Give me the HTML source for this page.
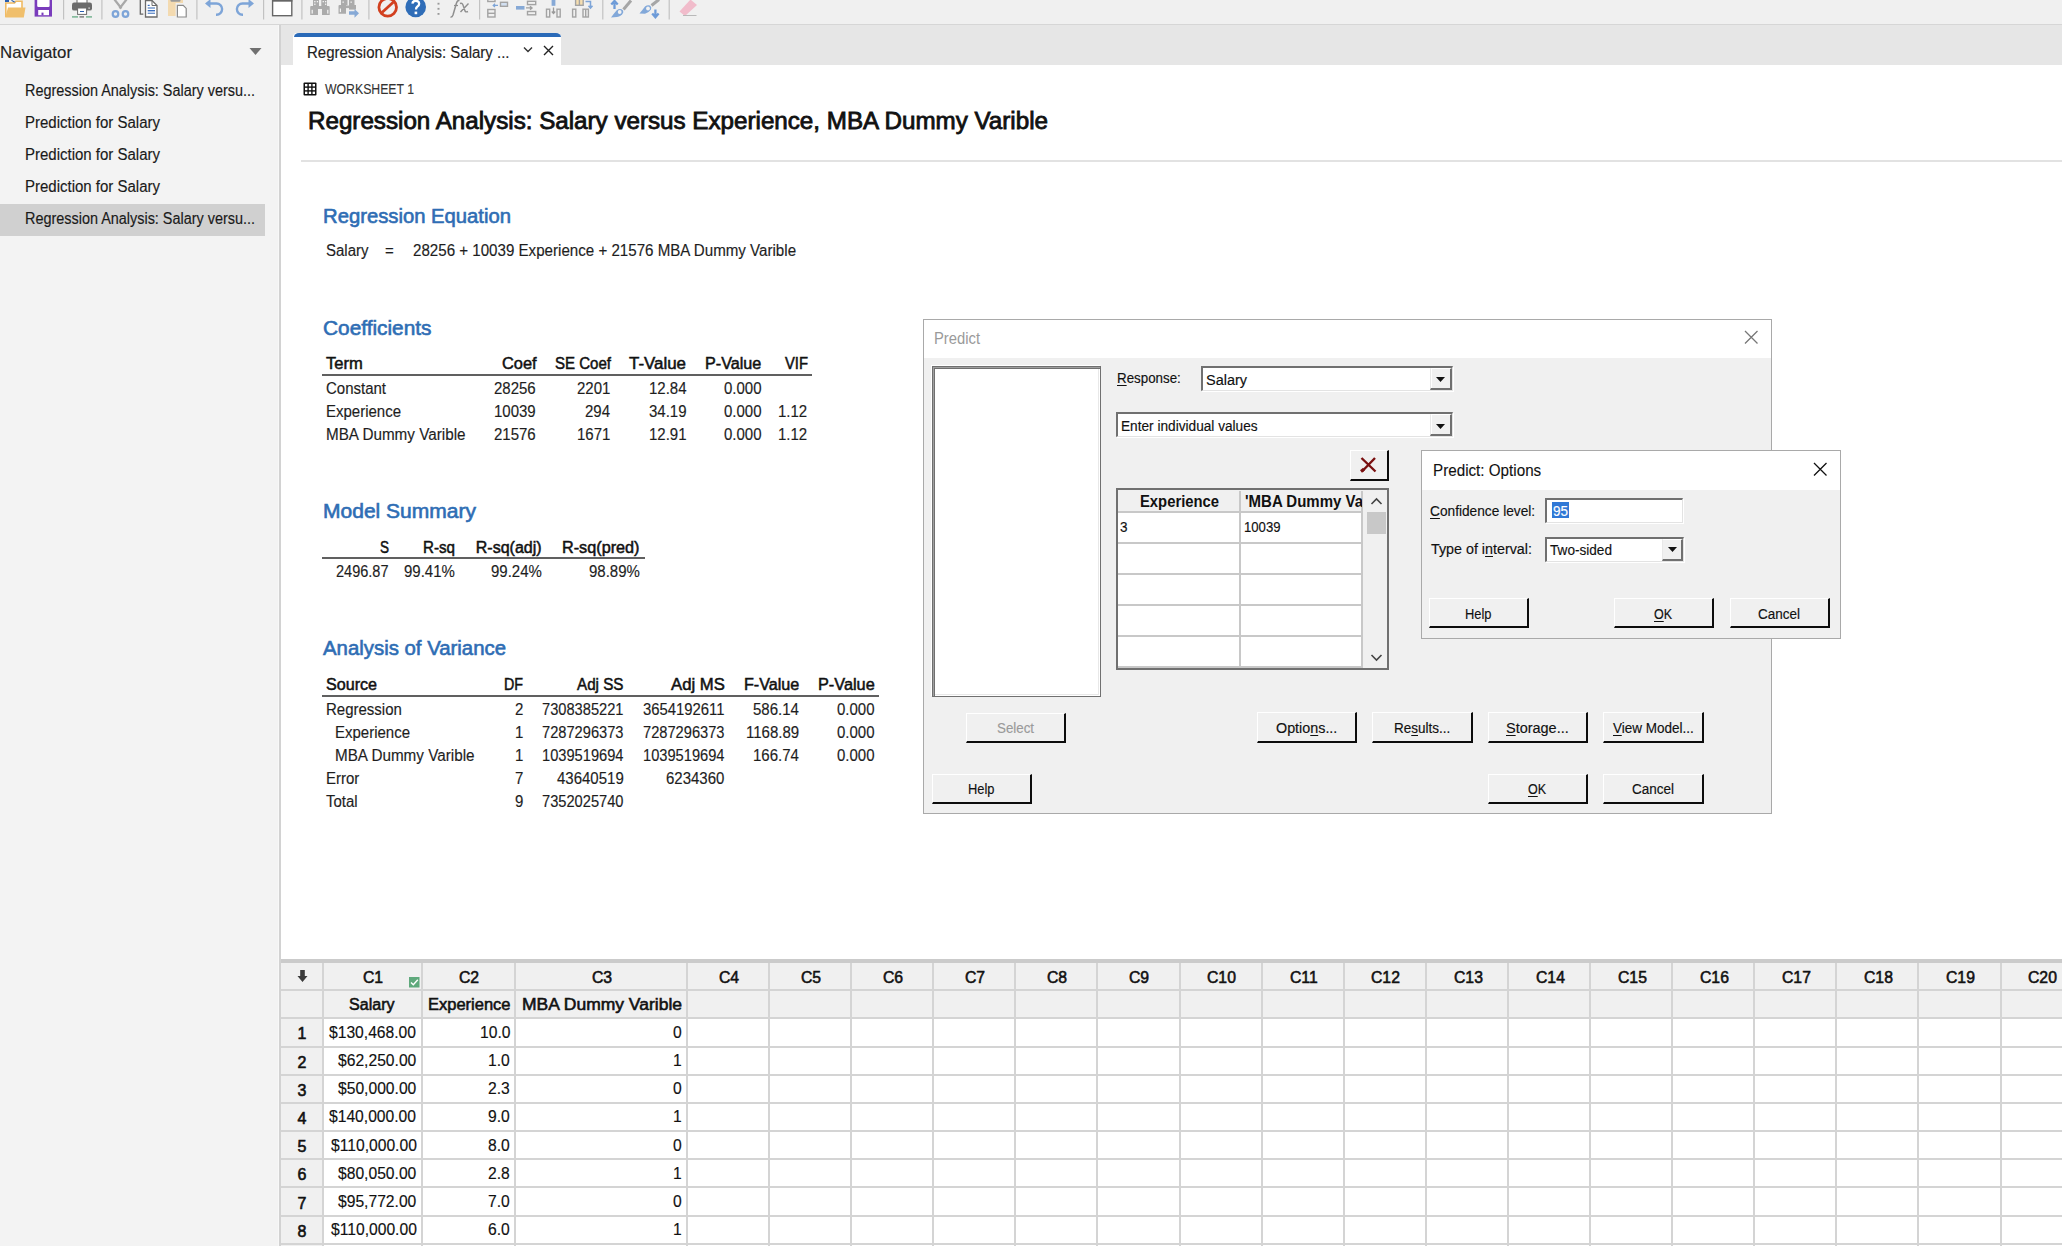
<!DOCTYPE html>
<html><head><meta charset="utf-8"><title>Minitab</title>
<style>
html,body{margin:0;padding:0;}
body{width:2062px;height:1246px;overflow:hidden;position:relative;background:#fff;font-family:"Liberation Sans",sans-serif;}
body>div{position:absolute;}
.t{white-space:nowrap;}
u{text-decoration:underline;text-underline-offset:1.5px;text-decoration-thickness:1px;}
</style></head><body>
<div style="left:0px;top:0px;width:2062px;height:24px;background:#f0f0f0;"></div>
<div style="left:0px;top:24px;width:2062px;height:1px;background:#d6d6d6;"></div>
<div style="left:0px;top:25px;width:279px;height:1221px;background:#f3f3f3;"></div>
<div style="left:278px;top:25px;width:1px;height:1221px;background:#f8f8f8;"></div>
<div style="left:279px;top:25px;width:2px;height:1221px;background:#d2d2d2;"></div>
<div style="left:281px;top:25px;width:1781px;height:40px;background:#e6e6e6;"></div>
<div style="left:281px;top:65px;width:1781px;height:894px;background:#ffffff;"></div>
<svg style="position:absolute;left:0;top:0" width="710" height="24" viewBox="0 0 710 24">
<!-- folder -->
<path d="M5.8 17 L5.8 3 L14.5 3 L16 1.3 L22 1.3 L22 8" fill="#fff" stroke="#f0bb63" stroke-width="1.6"/>
<path d="M8 7.6 L25.5 7.6 L23.8 17.6 L5.2 17.6 Z" fill="#f0bf6c"/>
<path d="M5 0 L9 0 L9 2 L5 2 Z M12 0 L15.5 2 L14 2.5 L11 0.5 Z" fill="#2a5fb0"/>
<!-- save -->
<rect x="34.6" y="0" width="17.4" height="16.6" fill="#7a3cbc"/>
<path d="M37.2 0 L49.6 0 L49.6 5.8 Q49.6 7 48.4 7 L38.4 7 Q37.2 7 37.2 5.8 Z" fill="#fff"/>
<rect x="38.2" y="10" width="10.8" height="5.2" fill="#fff"/>
<rect x="41.5" y="12.6" width="2" height="2.6" fill="#7a3cbc"/>
<rect x="63" y="0" width="1.2" height="19.5" fill="#c2c2c2"/>
<!-- printer -->
<rect x="77" y="-1" width="10" height="5.2" fill="#fff" stroke="#666" stroke-width="1"/>
<rect x="77" y="3" width="10" height="1.6" fill="#2a5fb0"/>
<rect x="72" y="2.6" width="20" height="8" rx="2.2" fill="#6b6b6b"/>
<rect x="77.6" y="8" width="9" height="6.4" fill="#fff" stroke="#6b6b6b" stroke-width="1"/>
<rect x="80" y="11" width="4" height="1" fill="#2a5fb0"/>
<rect x="88.5" y="7.5" width="1.2" height="1.2" fill="#fff"/>
<rect x="72" y="16.2" width="6" height="1.4" fill="#6fb08c"/>
<rect x="79.5" y="16.2" width="4.5" height="1.4" fill="#777"/>
<rect x="86" y="16.2" width="6" height="1.4" fill="#6fb08c"/>
<rect x="101.3" y="0" width="1.2" height="19.5" fill="#c2c2c2"/>
<!-- scissors -->
<path d="M114.5 -0.5 L121.5 8.5 M126.5 -0.5 L119.5 8.5" stroke="#a8a8a8" stroke-width="2.2" fill="none"/>
<circle cx="115.5" cy="14" r="2.8" fill="none" stroke="#7ea5d8" stroke-width="2.2"/>
<circle cx="125.5" cy="14" r="2.8" fill="none" stroke="#7ea5d8" stroke-width="2.2"/>
<!-- copy -->
<path d="M140.3 0 L140.3 14.2 L143.3 14.2" stroke="#666" stroke-width="1.3" fill="none"/>
<path d="M145.5 0.5 L152 0.5 L157 5.5 L157 17 L145.5 17 Z" fill="#fff" stroke="#6b6b6b" stroke-width="1.3"/>
<path d="M152 0.5 L152 5.5 L157 5.5" fill="none" stroke="#6b6b6b" stroke-width="1"/>
<rect x="147.7" y="4.8" width="2" height="1.2" fill="#3a6fc0"/>
<rect x="147.7" y="7.3" width="7.3" height="1.4" fill="#6d93cc"/>
<rect x="147.7" y="10" width="7.3" height="1.4" fill="#3a6fc0"/>
<rect x="147.7" y="12.6" width="7.3" height="1.4" fill="#6d93cc"/>
<!-- paste -->
<rect x="168" y="0" width="7.6" height="16" fill="#f3dab0"/>
<rect x="175" y="0" width="8" height="3" fill="#f3dab0"/>
<rect x="170.5" y="-1" width="10" height="2.8" rx="1.2" fill="#9a9a9a"/>
<path d="M177.4 5.4 L183.2 5.4 L186.2 8.4 L186.2 17 L177.4 17 Z" fill="#fff" stroke="#8a8a8a" stroke-width="1.2"/>
<rect x="196.3" y="0" width="1.2" height="19.5" fill="#c2c2c2"/>
<!-- undo / redo -->
<path d="M208 3.5 L216.5 3.5 A5.6 5.6 0 0 1 216.5 14.7 L216 14.7" stroke="#7ea5d8" stroke-width="2.4" fill="none"/>
<path d="M205 3.5 L210.5 -1 L210.5 8 Z" fill="#7ea5d8"/>
<path d="M251 3.5 L242.5 3.5 A5.6 5.6 0 0 0 242.5 14.7 L243 14.7" stroke="#7ea5d8" stroke-width="2.4" fill="none"/>
<path d="M254 3.5 L248.5 -1 L248.5 8 Z" fill="#7ea5d8"/>
<rect x="263" y="0" width="1.2" height="19.5" fill="#c2c2c2"/>
<!-- window -->
<rect x="272.6" y="0.5" width="19.2" height="15.2" fill="#fff" stroke="#666" stroke-width="1.4"/>
<rect x="272" y="-1" width="20.4" height="2.6" fill="#666"/>
<rect x="301.3" y="0" width="1.2" height="19.5" fill="#c2c2c2"/>
<!-- binoculars -->
<g fill="#ababab">
<path d="M310.2 7 Q310.2 6 311.2 6 L318 6 L318 15 L310.2 15 Z"/>
<rect x="313" y="-1" width="6" height="7.2"/>
<rect x="318" y="6" width="4" height="3"/>
<path d="M322 6 L328.7 6 Q329.7 6 329.7 7 L329.7 15 L322 15 Z"/>
<rect x="321.3" y="-1" width="5.7" height="7.2"/>
<path d="M338.5 6 Q338.5 5 339.5 5 L346 5 L346 13.7 L338.5 13.7 Z"/>
<rect x="341" y="-1" width="6.5" height="6.2"/>
<rect x="346" y="5.5" width="3.5" height="2.6"/>
<rect x="349" y="-1" width="5.5" height="6.2"/>
<rect x="349" y="5" width="7" height="4.6"/>
</g>
<g fill="#f4f4f4">
<rect x="311.6" y="9.8" width="1.2" height="3.8"/><rect x="327.2" y="9.8" width="1.2" height="3.8"/>
<rect x="314.2" y="1" width="1.3" height="1.3"/><rect x="316.8" y="1" width="1.3" height="1.3"/><rect x="314.2" y="3.6" width="1.3" height="1.3"/>
<rect x="322.6" y="1" width="1.3" height="1.3"/><rect x="325" y="1" width="1.3" height="1.3"/><rect x="325" y="3.6" width="1.3" height="1.3"/>
<rect x="339.8" y="8.5" width="1.2" height="3.6"/>
<rect x="342.5" y="1.5" width="1.3" height="1.3"/><rect x="350.5" y="1.5" width="1.3" height="1.3"/>
</g>
<path d="M349 11.3 L354.5 11.3 L354.5 9 L359 13.3 L354.5 17.7 L354.5 14.8 L349 14.8 Z" fill="#86a9d6"/>
<rect x="368.3" y="0" width="1.2" height="19.5" fill="#c2c2c2"/>
<!-- stop -->
<circle cx="387.7" cy="7.3" r="8.8" fill="none" stroke="#d2401f" stroke-width="2.8"/>
<path d="M382 12.5 L393.5 2" stroke="#d2401f" stroke-width="2.8"/>
<!-- help -->
<circle cx="415.7" cy="7" r="10.3" fill="#2f6db8"/>
<path d="M412.4 3.6 Q412.6 0.8 415.8 0.8 Q419.2 0.8 419.2 3.8 Q419.2 5.6 417.2 6.8 Q416 7.6 416 9.6" stroke="#fff" stroke-width="2.3" fill="none"/>
<rect x="414.6" y="11.6" width="2.6" height="2.6" fill="#fff"/>
<rect x="437.5" y="2.8" width="2" height="1.8" fill="#999"/><rect x="437.5" y="7.9" width="2" height="1.8" fill="#999"/><rect x="437.5" y="13" width="2" height="1.8" fill="#999"/>
<!-- fx -->
<path d="M450.5 17 Q452 17.5 453 15 L456.5 3 Q457.5 0 459.5 0.5" stroke="#8f8f8f" stroke-width="1.5" fill="none"/>
<path d="M454 5.5 L458 5.5" stroke="#8f8f8f" stroke-width="1.2"/>
<path d="M460 3.5 Q462 2.5 463 5 L465 11 Q466 12.5 468 11.5 M468.5 3.5 L460.5 12" stroke="#8f8f8f" stroke-width="1.4" fill="none"/>
<rect x="479" y="0" width="1.2" height="19.5" fill="#c2c2c2"/>
<!-- layout icons -->
<g fill="none" stroke="#a3a3a3" stroke-width="1.4">
<rect x="487.8" y="-1" width="7.2" height="2.5"/>
<rect x="487.8" y="9.5" width="7.2" height="7.5"/><path d="M488 13.3 L495 13.3"/>
<rect x="500.5" y="2.3" width="7" height="4" fill="#d2e0f2"/>
<rect x="527.5" y="1.3" width="8.2" height="3.3"/><rect x="527.5" y="11.5" width="8.2" height="3.3"/>
<rect x="546.5" y="9.2" width="3.2" height="7.8"/><rect x="557" y="9.2" width="3.2" height="7.8"/>
<rect x="572.6" y="9.2" width="3.2" height="7.8"/><rect x="583" y="9.2" width="5.4" height="7.8"/><path d="M585.7 9.2 L585.7 17"/>
<rect x="575.6" y="-1" width="7.6" height="6.3" fill="#f6deb0"/><path d="M579.4 -1 L579.4 5"/>
</g>
<path d="M498 5.4 L493.5 5.4 M495 3.8 L493.2 5.4 L495 7" stroke="#7ea5d8" stroke-width="1.2" fill="none"/>
<rect x="516" y="6" width="8.5" height="3.6" fill="#86a9d6"/>
<path d="M526 7.9 L531.5 7.9 M530 6.2 L532 7.9 L530 9.6" stroke="#a0a0a0" stroke-width="1.4" fill="none"/>
<rect x="551.6" y="-1" width="3.8" height="6.8" fill="#86a9d6"/>
<path d="M553.5 7.5 L553.5 13.5 M551.8 11.5 L553.5 13.5 L555.2 11.5" stroke="#9a9a9a" stroke-width="1.3" fill="none"/>
<path d="M585.5 1.5 L590.5 1.5 L590.5 7.5 M588.5 5.8 L590.5 8.2 L592.5 5.8" stroke="#7ea5d8" stroke-width="1.5" fill="none"/>
<rect x="602.2" y="0" width="1.2" height="19.5" fill="#c2c2c2"/>
<!-- brush icons -->
<path d="M614.5 9 L614.5 3 M611.3 4.6 L614.5 1 L617.7 4.6" stroke="#6d9bd8" stroke-width="2.3" fill="none"/>
<path d="M611 17.6 Q613 14.5 616.5 10.5 Q619 8.5 621.5 9.2 Q624 10.5 623 13 Q621.5 16 617 17 Z" fill="#82a8d9"/>
<circle cx="619.7" cy="12" r="1.9" fill="#f2f2f2"/>
<path d="M623.5 9.5 L631 0.5" stroke="#a6a6a6" stroke-width="3"/>
<path d="M639.5 13.5 Q642 10.5 645 6.5 Q647.5 4.5 650 5.5 Q652 7 651 9.5 Q649 12.5 645 13.8 Z" fill="#82a8d9"/>
<circle cx="648" cy="8.5" r="1.9" fill="#f2f2f2"/>
<path d="M651.5 5.5 L659 -0.5" stroke="#a6a6a6" stroke-width="3"/>
<path d="M655.4 9.5 L655.4 16 M652.2 13.5 L655.4 17.3 L658.6 13.5" stroke="#6d9bd8" stroke-width="2.3" fill="none"/>
<rect x="668.6" y="0" width="1.2" height="19.5" fill="#c2c2c2"/>
<!-- eraser -->
<path d="M679.5 11.5 L690.5 -0.5 L697 5 L685 16 Z" fill="#f1bccb"/>
<path d="M683 15.5 L696.5 15.5" stroke="#b9b9b9" stroke-width="1"/>
</svg>
<div class="t" style="left:0.00px;top:43.37px;font-size:16.5px;line-height:18.430px;color:#222;-webkit-text-stroke:0.15px #222;transform:scaleX(1.0197);transform-origin:0 0;">Navigator</div>
<svg style="position:absolute;left:249px;top:47px" width="14" height="9"><path d="M0.5 1 L12.5 1 L6.5 8 Z" fill="#707070"/></svg>
<div style="left:0px;top:204px;width:265px;height:32px;background:#d0d0d0;"></div>
<div class="t" style="left:24.50px;top:81.82px;font-size:16px;line-height:17.872px;color:#1a1a1a;-webkit-text-stroke:0.15px #1a1a1a;transform:scaleX(0.9012);transform-origin:0 0;">Regression Analysis: Salary versu...</div>
<div class="t" style="left:24.50px;top:113.82px;font-size:16px;line-height:17.872px;color:#1a1a1a;-webkit-text-stroke:0.15px #1a1a1a;transform:scaleX(0.9371);transform-origin:0 0;">Prediction for Salary</div>
<div class="t" style="left:24.50px;top:145.82px;font-size:16px;line-height:17.872px;color:#1a1a1a;-webkit-text-stroke:0.15px #1a1a1a;transform:scaleX(0.9371);transform-origin:0 0;">Prediction for Salary</div>
<div class="t" style="left:24.50px;top:177.82px;font-size:16px;line-height:17.872px;color:#1a1a1a;-webkit-text-stroke:0.15px #1a1a1a;transform:scaleX(0.9371);transform-origin:0 0;">Prediction for Salary</div>
<div class="t" style="left:24.50px;top:209.82px;font-size:16px;line-height:17.872px;color:#1a1a1a;-webkit-text-stroke:0.15px #1a1a1a;transform:scaleX(0.9012);transform-origin:0 0;">Regression Analysis: Salary versu...</div>
<div style="left:293px;top:33px;width:268px;height:32px;background:#fff;border-top-left-radius:4px;border-top-right-radius:4px;"></div>
<div style="left:293.5px;top:33px;width:267.5px;height:4px;background:#2a6ab8;border-top-left-radius:5px 4px;border-top-right-radius:5px 4px;"></div>
<div class="t" style="left:307.30px;top:43.82px;font-size:16px;line-height:17.872px;color:#222;-webkit-text-stroke:0.15px #222;transform:scaleX(0.9371);transform-origin:0 0;">Regression Analysis: Salary ...</div>
<svg style="position:absolute;left:523px;top:46px" width="10" height="8"><path d="M1 1.5 L5 5.5 L9 1.5" stroke="#333" stroke-width="1.4" fill="none"/></svg>
<svg style="position:absolute;left:543px;top:45px" width="11" height="11"><path d="M1 1 L10 10 M10 1 L1 10" stroke="#222" stroke-width="1.4" fill="none"/></svg>
<svg style="position:absolute;left:302.5px;top:81.5px" width="14" height="14" viewBox="0 0 14 14"><rect x="0.5" y="0.5" width="13" height="13" rx="1" fill="#111"/><rect x="2.0" y="2.0" width="2.4" height="2.4" fill="#fff"/><rect x="2.0" y="5.8" width="2.4" height="2.4" fill="#fff"/><rect x="2.0" y="9.6" width="2.4" height="2.4" fill="#fff"/><rect x="5.8" y="2.0" width="2.4" height="2.4" fill="#fff"/><rect x="5.8" y="5.8" width="2.4" height="2.4" fill="#fff"/><rect x="5.8" y="9.6" width="2.4" height="2.4" fill="#fff"/><rect x="9.6" y="2.0" width="2.4" height="2.4" fill="#fff"/><rect x="9.6" y="5.8" width="2.4" height="2.4" fill="#fff"/><rect x="9.6" y="9.6" width="2.4" height="2.4" fill="#fff"/></svg>
<div class="t" style="left:324.70px;top:81.63px;font-size:14px;line-height:15.638px;color:#333;-webkit-text-stroke:0.1px #333;transform:scaleX(0.8755);transform-origin:0 0;">WORKSHEET 1</div>
<div class="t" style="left:307.50px;top:108.78px;font-size:23px;line-height:25.691px;color:#111;-webkit-text-stroke:0.8px #111;transform:scaleX(1.0513);transform-origin:0 0;">Regression Analysis: Salary versus Experience, MBA Dummy Varible</div>
<div style="left:301px;top:160px;width:1761px;height:2px;background:#e2e2e2;"></div>
<div class="t" style="left:323.00px;top:205.20px;font-size:20px;line-height:22.340px;color:#2e6db4;-webkit-text-stroke:0.6px #2e6db4;transform:scaleX(1.0126);transform-origin:0 0;">Regression Equation</div>
<div class="t" style="left:326.20px;top:241.82px;font-size:16px;line-height:17.872px;color:#1e1e1e;-webkit-text-stroke:0.15px #1e1e1e;transform:scaleX(0.9375);transform-origin:0 0;">Salary</div>
<div class="t" style="left:385.40px;top:241.82px;font-size:16px;line-height:17.872px;color:#1e1e1e;-webkit-text-stroke:0.15px #1e1e1e;transform:scaleX(0.9375);transform-origin:0 0;">=</div>
<div class="t" style="left:413.20px;top:241.82px;font-size:16px;line-height:17.872px;color:#1e1e1e;-webkit-text-stroke:0.15px #1e1e1e;transform:scaleX(0.9451);transform-origin:0 0;">28256 + 10039 Experience + 21576 MBA Dummy Varible</div>
<div class="t" style="left:323.00px;top:316.80px;font-size:20px;line-height:22.340px;color:#2e6db4;-webkit-text-stroke:0.6px #2e6db4;transform:scaleX(1.0420);transform-origin:0 0;">Coefficients</div>
<div class="t" style="left:326.20px;top:354.82px;font-size:16px;line-height:17.872px;color:#111;-webkit-text-stroke:0.5px #111;transform:scaleX(1.0323);transform-origin:0 0;">Term</div>
<div class="t" style="left:501.70px;top:354.82px;font-size:16px;line-height:17.872px;color:#111;-webkit-text-stroke:0.5px #111;transform:scaleX(1.0238);transform-origin:0 0;">Coef</div>
<div class="t" style="left:554.60px;top:354.82px;font-size:16px;line-height:17.872px;color:#111;-webkit-text-stroke:0.5px #111;transform:scaleX(0.9398);transform-origin:0 0;">SE Coef</div>
<div class="t" style="left:629.40px;top:354.82px;font-size:16px;line-height:17.872px;color:#111;-webkit-text-stroke:0.5px #111;transform:scaleX(1.0565);transform-origin:0 0;">T-Value</div>
<div class="t" style="left:705.00px;top:354.82px;font-size:16px;line-height:17.872px;color:#111;-webkit-text-stroke:0.5px #111;transform:scaleX(1.0102);transform-origin:0 0;">P-Value</div>
<div class="t" style="left:784.50px;top:354.82px;font-size:16px;line-height:17.872px;color:#111;-webkit-text-stroke:0.5px #111;transform:scaleX(0.9241);transform-origin:0 0;">VIF</div>
<div style="left:322px;top:374px;width:490px;height:2px;background:#606060;"></div>
<div class="t" style="left:326.00px;top:379.82px;font-size:16px;line-height:17.872px;color:#1e1e1e;-webkit-text-stroke:0.15px #1e1e1e;transform:scaleX(0.9375);transform-origin:0 0;">Constant</div>
<div class="t" style="left:494.09px;top:379.82px;font-size:16px;line-height:17.872px;color:#1e1e1e;-webkit-text-stroke:0.15px #1e1e1e;transform:scaleX(0.9375);transform-origin:0 0;">28256</div>
<div class="t" style="left:577.03px;top:379.82px;font-size:16px;line-height:17.872px;color:#1e1e1e;-webkit-text-stroke:0.15px #1e1e1e;transform:scaleX(0.9375);transform-origin:0 0;">2201</div>
<div class="t" style="left:648.67px;top:379.82px;font-size:16px;line-height:17.872px;color:#1e1e1e;-webkit-text-stroke:0.15px #1e1e1e;transform:scaleX(0.9375);transform-origin:0 0;">12.84</div>
<div class="t" style="left:723.77px;top:379.82px;font-size:16px;line-height:17.872px;color:#1e1e1e;-webkit-text-stroke:0.15px #1e1e1e;transform:scaleX(0.9375);transform-origin:0 0;">0.000</div>
<div class="t" style="left:326.00px;top:402.82px;font-size:16px;line-height:17.872px;color:#1e1e1e;-webkit-text-stroke:0.15px #1e1e1e;transform:scaleX(0.9375);transform-origin:0 0;">Experience</div>
<div class="t" style="left:494.09px;top:402.82px;font-size:16px;line-height:17.872px;color:#1e1e1e;-webkit-text-stroke:0.15px #1e1e1e;transform:scaleX(0.9375);transform-origin:0 0;">10039</div>
<div class="t" style="left:585.38px;top:402.82px;font-size:16px;line-height:17.872px;color:#1e1e1e;-webkit-text-stroke:0.15px #1e1e1e;transform:scaleX(0.9375);transform-origin:0 0;">294</div>
<div class="t" style="left:648.67px;top:402.82px;font-size:16px;line-height:17.872px;color:#1e1e1e;-webkit-text-stroke:0.15px #1e1e1e;transform:scaleX(0.9375);transform-origin:0 0;">34.19</div>
<div class="t" style="left:723.77px;top:402.82px;font-size:16px;line-height:17.872px;color:#1e1e1e;-webkit-text-stroke:0.15px #1e1e1e;transform:scaleX(0.9375);transform-origin:0 0;">0.000</div>
<div class="t" style="left:778.31px;top:402.82px;font-size:16px;line-height:17.872px;color:#1e1e1e;-webkit-text-stroke:0.15px #1e1e1e;transform:scaleX(0.9375);transform-origin:0 0;">1.12</div>
<div class="t" style="left:326.00px;top:425.82px;font-size:16px;line-height:17.872px;color:#1e1e1e;-webkit-text-stroke:0.15px #1e1e1e;transform:scaleX(0.9529);transform-origin:0 0;">MBA Dummy Varible</div>
<div class="t" style="left:494.09px;top:425.82px;font-size:16px;line-height:17.872px;color:#1e1e1e;-webkit-text-stroke:0.15px #1e1e1e;transform:scaleX(0.9375);transform-origin:0 0;">21576</div>
<div class="t" style="left:577.03px;top:425.82px;font-size:16px;line-height:17.872px;color:#1e1e1e;-webkit-text-stroke:0.15px #1e1e1e;transform:scaleX(0.9375);transform-origin:0 0;">1671</div>
<div class="t" style="left:648.67px;top:425.82px;font-size:16px;line-height:17.872px;color:#1e1e1e;-webkit-text-stroke:0.15px #1e1e1e;transform:scaleX(0.9375);transform-origin:0 0;">12.91</div>
<div class="t" style="left:723.77px;top:425.82px;font-size:16px;line-height:17.872px;color:#1e1e1e;-webkit-text-stroke:0.15px #1e1e1e;transform:scaleX(0.9375);transform-origin:0 0;">0.000</div>
<div class="t" style="left:778.31px;top:425.82px;font-size:16px;line-height:17.872px;color:#1e1e1e;-webkit-text-stroke:0.15px #1e1e1e;transform:scaleX(0.9375);transform-origin:0 0;">1.12</div>
<div class="t" style="left:323.00px;top:500.00px;font-size:20px;line-height:22.340px;color:#2e6db4;-webkit-text-stroke:0.6px #2e6db4;transform:scaleX(1.0509);transform-origin:0 0;">Model Summary</div>
<div class="t" style="left:379.60px;top:538.82px;font-size:16px;line-height:17.872px;color:#111;-webkit-text-stroke:0.5px #111;transform:scaleX(0.8433);transform-origin:0 0;">S</div>
<div class="t" style="left:423.10px;top:538.82px;font-size:16px;line-height:17.872px;color:#111;-webkit-text-stroke:0.5px #111;transform:scaleX(0.9473);transform-origin:0 0;">R-sq</div>
<div class="t" style="left:475.80px;top:538.82px;font-size:16px;line-height:17.872px;color:#111;-webkit-text-stroke:0.5px #111;">R-sq(adj)</div>
<div class="t" style="left:562.30px;top:538.82px;font-size:16px;line-height:17.872px;color:#111;-webkit-text-stroke:0.5px #111;transform:scaleX(1.0137);transform-origin:0 0;">R-sq(pred)</div>
<div style="left:322px;top:557px;width:323px;height:2px;background:#606060;"></div>
<div class="t" style="left:336.40px;top:562.82px;font-size:16px;line-height:17.872px;color:#1e1e1e;-webkit-text-stroke:0.15px #1e1e1e;transform:scaleX(0.9078);transform-origin:0 0;">2496.87</div>
<div class="t" style="left:404.23px;top:562.82px;font-size:16px;line-height:17.872px;color:#1e1e1e;-webkit-text-stroke:0.15px #1e1e1e;transform:scaleX(0.9375);transform-origin:0 0;">99.41%</div>
<div class="t" style="left:491.33px;top:562.82px;font-size:16px;line-height:17.872px;color:#1e1e1e;-webkit-text-stroke:0.15px #1e1e1e;transform:scaleX(0.9375);transform-origin:0 0;">99.24%</div>
<div class="t" style="left:588.93px;top:562.82px;font-size:16px;line-height:17.872px;color:#1e1e1e;-webkit-text-stroke:0.15px #1e1e1e;transform:scaleX(0.9375);transform-origin:0 0;">98.89%</div>
<div class="t" style="left:323.00px;top:636.70px;font-size:20px;line-height:22.340px;color:#2e6db4;-webkit-text-stroke:0.6px #2e6db4;transform:scaleX(1.0183);transform-origin:0 0;">Analysis of Variance</div>
<div class="t" style="left:326.20px;top:675.82px;font-size:16px;line-height:17.872px;color:#111;-webkit-text-stroke:0.5px #111;transform:scaleX(1.0061);transform-origin:0 0;">Source</div>
<div class="t" style="left:504.00px;top:675.82px;font-size:16px;line-height:17.872px;color:#111;-webkit-text-stroke:0.5px #111;transform:scaleX(0.8909);transform-origin:0 0;">DF</div>
<div class="t" style="left:577.30px;top:675.82px;font-size:16px;line-height:17.872px;color:#111;-webkit-text-stroke:0.5px #111;transform:scaleX(0.9506);transform-origin:0 0;">Adj SS</div>
<div class="t" style="left:671.00px;top:675.82px;font-size:16px;line-height:17.872px;color:#111;-webkit-text-stroke:0.5px #111;transform:scaleX(1.0432);transform-origin:0 0;">Adj MS</div>
<div class="t" style="left:743.70px;top:675.82px;font-size:16px;line-height:17.872px;color:#111;-webkit-text-stroke:0.5px #111;transform:scaleX(1.0085);transform-origin:0 0;">F-Value</div>
<div class="t" style="left:817.90px;top:675.82px;font-size:16px;line-height:17.872px;color:#111;-webkit-text-stroke:0.5px #111;transform:scaleX(1.0174);transform-origin:0 0;">P-Value</div>
<div style="left:322px;top:695px;width:557px;height:2px;background:#606060;"></div>
<div class="t" style="left:326.20px;top:700.82px;font-size:16px;line-height:17.872px;color:#1e1e1e;-webkit-text-stroke:0.15px #1e1e1e;transform:scaleX(0.9375);transform-origin:0 0;">Regression</div>
<div class="t" style="left:514.66px;top:700.82px;font-size:16px;line-height:17.872px;color:#1e1e1e;-webkit-text-stroke:0.15px #1e1e1e;transform:scaleX(0.9375);transform-origin:0 0;">2</div>
<div class="t" style="left:542.30px;top:700.82px;font-size:16px;line-height:17.872px;color:#1e1e1e;-webkit-text-stroke:0.15px #1e1e1e;transform:scaleX(0.9160);transform-origin:0 0;">7308385221</div>
<div class="t" style="left:643.30px;top:700.82px;font-size:16px;line-height:17.872px;color:#1e1e1e;-webkit-text-stroke:0.15px #1e1e1e;transform:scaleX(0.9284);transform-origin:0 0;">3654192611</div>
<div class="t" style="left:753.13px;top:700.82px;font-size:16px;line-height:17.872px;color:#1e1e1e;-webkit-text-stroke:0.15px #1e1e1e;transform:scaleX(0.9375);transform-origin:0 0;">586.14</div>
<div class="t" style="left:837.07px;top:700.82px;font-size:16px;line-height:17.872px;color:#1e1e1e;-webkit-text-stroke:0.15px #1e1e1e;transform:scaleX(0.9375);transform-origin:0 0;">0.000</div>
<div class="t" style="left:335.20px;top:723.82px;font-size:16px;line-height:17.872px;color:#1e1e1e;-webkit-text-stroke:0.15px #1e1e1e;transform:scaleX(0.9375);transform-origin:0 0;">Experience</div>
<div class="t" style="left:514.66px;top:723.82px;font-size:16px;line-height:17.872px;color:#1e1e1e;-webkit-text-stroke:0.15px #1e1e1e;transform:scaleX(0.9375);transform-origin:0 0;">1</div>
<div class="t" style="left:542.30px;top:723.82px;font-size:16px;line-height:17.872px;color:#1e1e1e;-webkit-text-stroke:0.15px #1e1e1e;transform:scaleX(0.9160);transform-origin:0 0;">7287296373</div>
<div class="t" style="left:643.30px;top:723.82px;font-size:16px;line-height:17.872px;color:#1e1e1e;-webkit-text-stroke:0.15px #1e1e1e;transform:scaleX(0.9160);transform-origin:0 0;">7287296373</div>
<div class="t" style="left:745.90px;top:723.82px;font-size:16px;line-height:17.872px;color:#1e1e1e;-webkit-text-stroke:0.15px #1e1e1e;transform:scaleX(0.9375);transform-origin:0 0;">1168.89</div>
<div class="t" style="left:837.07px;top:723.82px;font-size:16px;line-height:17.872px;color:#1e1e1e;-webkit-text-stroke:0.15px #1e1e1e;transform:scaleX(0.9375);transform-origin:0 0;">0.000</div>
<div class="t" style="left:335.20px;top:746.82px;font-size:16px;line-height:17.872px;color:#1e1e1e;-webkit-text-stroke:0.15px #1e1e1e;transform:scaleX(0.9529);transform-origin:0 0;">MBA Dummy Varible</div>
<div class="t" style="left:514.66px;top:746.82px;font-size:16px;line-height:17.872px;color:#1e1e1e;-webkit-text-stroke:0.15px #1e1e1e;transform:scaleX(0.9375);transform-origin:0 0;">1</div>
<div class="t" style="left:542.30px;top:746.82px;font-size:16px;line-height:17.872px;color:#1e1e1e;-webkit-text-stroke:0.15px #1e1e1e;transform:scaleX(0.9160);transform-origin:0 0;">1039519694</div>
<div class="t" style="left:643.30px;top:746.82px;font-size:16px;line-height:17.872px;color:#1e1e1e;-webkit-text-stroke:0.15px #1e1e1e;transform:scaleX(0.9160);transform-origin:0 0;">1039519694</div>
<div class="t" style="left:753.13px;top:746.82px;font-size:16px;line-height:17.872px;color:#1e1e1e;-webkit-text-stroke:0.15px #1e1e1e;transform:scaleX(0.9375);transform-origin:0 0;">166.74</div>
<div class="t" style="left:837.07px;top:746.82px;font-size:16px;line-height:17.872px;color:#1e1e1e;-webkit-text-stroke:0.15px #1e1e1e;transform:scaleX(0.9375);transform-origin:0 0;">0.000</div>
<div class="t" style="left:326.20px;top:769.82px;font-size:16px;line-height:17.872px;color:#1e1e1e;-webkit-text-stroke:0.15px #1e1e1e;transform:scaleX(0.9375);transform-origin:0 0;">Error</div>
<div class="t" style="left:514.66px;top:769.82px;font-size:16px;line-height:17.872px;color:#1e1e1e;-webkit-text-stroke:0.15px #1e1e1e;transform:scaleX(0.9375);transform-origin:0 0;">7</div>
<div class="t" style="left:557.07px;top:769.82px;font-size:16px;line-height:17.872px;color:#1e1e1e;-webkit-text-stroke:0.15px #1e1e1e;transform:scaleX(0.9375);transform-origin:0 0;">43640519</div>
<div class="t" style="left:666.41px;top:769.82px;font-size:16px;line-height:17.872px;color:#1e1e1e;-webkit-text-stroke:0.15px #1e1e1e;transform:scaleX(0.9375);transform-origin:0 0;">6234360</div>
<div class="t" style="left:326.20px;top:792.82px;font-size:16px;line-height:17.872px;color:#1e1e1e;-webkit-text-stroke:0.15px #1e1e1e;transform:scaleX(0.9375);transform-origin:0 0;">Total</div>
<div class="t" style="left:514.66px;top:792.82px;font-size:16px;line-height:17.872px;color:#1e1e1e;-webkit-text-stroke:0.15px #1e1e1e;transform:scaleX(0.9375);transform-origin:0 0;">9</div>
<div class="t" style="left:542.30px;top:792.82px;font-size:16px;line-height:17.872px;color:#1e1e1e;-webkit-text-stroke:0.15px #1e1e1e;transform:scaleX(0.9160);transform-origin:0 0;">7352025740</div>
<div style="left:281px;top:959px;width:1781px;height:4px;background:#cbcbcb;"></div>
<div style="left:281px;top:963px;width:1781px;height:55px;background:#f0f0f0;"></div>
<div style="left:322px;top:1018px;width:1740px;height:228px;background:#fff;"></div>
<div style="left:281px;top:1018px;width:41px;height:228px;background:#f0f0f0;"></div>
<div style="left:322px;top:963px;width:2px;height:283px;background:#d4d4d4;"></div>
<div style="left:421px;top:963px;width:2px;height:283px;background:#d4d4d4;"></div>
<div style="left:514px;top:963px;width:2px;height:283px;background:#d4d4d4;"></div>
<div style="left:686px;top:963px;width:2px;height:283px;background:#d4d4d4;"></div>
<div style="left:768px;top:963px;width:2px;height:283px;background:#d4d4d4;"></div>
<div style="left:850px;top:963px;width:2px;height:283px;background:#d4d4d4;"></div>
<div style="left:932px;top:963px;width:2px;height:283px;background:#d4d4d4;"></div>
<div style="left:1014px;top:963px;width:2px;height:283px;background:#d4d4d4;"></div>
<div style="left:1096px;top:963px;width:2px;height:283px;background:#d4d4d4;"></div>
<div style="left:1179px;top:963px;width:2px;height:283px;background:#d4d4d4;"></div>
<div style="left:1261px;top:963px;width:2px;height:283px;background:#d4d4d4;"></div>
<div style="left:1343px;top:963px;width:2px;height:283px;background:#d4d4d4;"></div>
<div style="left:1425px;top:963px;width:2px;height:283px;background:#d4d4d4;"></div>
<div style="left:1507px;top:963px;width:2px;height:283px;background:#d4d4d4;"></div>
<div style="left:1589px;top:963px;width:2px;height:283px;background:#d4d4d4;"></div>
<div style="left:1671px;top:963px;width:2px;height:283px;background:#d4d4d4;"></div>
<div style="left:1753px;top:963px;width:2px;height:283px;background:#d4d4d4;"></div>
<div style="left:1835px;top:963px;width:2px;height:283px;background:#d4d4d4;"></div>
<div style="left:1917px;top:963px;width:2px;height:283px;background:#d4d4d4;"></div>
<div style="left:2000px;top:963px;width:2px;height:283px;background:#d4d4d4;"></div>
<div style="left:2082px;top:963px;width:2px;height:283px;background:#d4d4d4;"></div>
<div style="left:281px;top:989px;width:1781px;height:2px;background:#d4d4d4;"></div>
<div style="left:281px;top:1017px;width:1781px;height:2px;background:#d4d4d4;"></div>
<div style="left:281px;top:1046px;width:1781px;height:2px;background:#d4d4d4;"></div>
<div style="left:281px;top:1074px;width:1781px;height:2px;background:#d4d4d4;"></div>
<div style="left:281px;top:1102px;width:1781px;height:2px;background:#d4d4d4;"></div>
<div style="left:281px;top:1130px;width:1781px;height:2px;background:#d4d4d4;"></div>
<div style="left:281px;top:1158px;width:1781px;height:2px;background:#d4d4d4;"></div>
<div style="left:281px;top:1186px;width:1781px;height:2px;background:#d4d4d4;"></div>
<div style="left:281px;top:1215px;width:1781px;height:2px;background:#d4d4d4;"></div>
<div style="left:281px;top:1243px;width:1781px;height:2px;background:#d4d4d4;"></div>
<div class="t" style="left:363.43px;top:968.82px;font-size:16px;line-height:17.872px;color:#111;-webkit-text-stroke:0.55px #111;transform:scaleX(0.9844);transform-origin:0 0;">C1</div>
<div class="t" style="left:459.43px;top:968.82px;font-size:16px;line-height:17.872px;color:#111;-webkit-text-stroke:0.55px #111;transform:scaleX(0.9844);transform-origin:0 0;">C2</div>
<div class="t" style="left:591.93px;top:968.82px;font-size:16px;line-height:17.872px;color:#111;-webkit-text-stroke:0.55px #111;transform:scaleX(0.9844);transform-origin:0 0;">C3</div>
<div class="t" style="left:718.98px;top:968.82px;font-size:16px;line-height:17.872px;color:#111;-webkit-text-stroke:0.55px #111;transform:scaleX(0.9844);transform-origin:0 0;">C4</div>
<div class="t" style="left:801.08px;top:968.82px;font-size:16px;line-height:17.872px;color:#111;-webkit-text-stroke:0.55px #111;transform:scaleX(0.9844);transform-origin:0 0;">C5</div>
<div class="t" style="left:883.18px;top:968.82px;font-size:16px;line-height:17.872px;color:#111;-webkit-text-stroke:0.55px #111;transform:scaleX(0.9844);transform-origin:0 0;">C6</div>
<div class="t" style="left:965.28px;top:968.82px;font-size:16px;line-height:17.872px;color:#111;-webkit-text-stroke:0.55px #111;transform:scaleX(0.9844);transform-origin:0 0;">C7</div>
<div class="t" style="left:1047.38px;top:968.82px;font-size:16px;line-height:17.872px;color:#111;-webkit-text-stroke:0.55px #111;transform:scaleX(0.9844);transform-origin:0 0;">C8</div>
<div class="t" style="left:1129.48px;top:968.82px;font-size:16px;line-height:17.872px;color:#111;-webkit-text-stroke:0.55px #111;transform:scaleX(0.9844);transform-origin:0 0;">C9</div>
<div class="t" style="left:1207.20px;top:968.82px;font-size:16px;line-height:17.872px;color:#111;-webkit-text-stroke:0.55px #111;transform:scaleX(0.9844);transform-origin:0 0;">C10</div>
<div class="t" style="left:1289.89px;top:968.82px;font-size:16px;line-height:17.872px;color:#111;-webkit-text-stroke:0.55px #111;transform:scaleX(0.9844);transform-origin:0 0;">C11</div>
<div class="t" style="left:1371.40px;top:968.82px;font-size:16px;line-height:17.872px;color:#111;-webkit-text-stroke:0.55px #111;transform:scaleX(0.9844);transform-origin:0 0;">C12</div>
<div class="t" style="left:1453.50px;top:968.82px;font-size:16px;line-height:17.872px;color:#111;-webkit-text-stroke:0.55px #111;transform:scaleX(0.9844);transform-origin:0 0;">C13</div>
<div class="t" style="left:1535.60px;top:968.82px;font-size:16px;line-height:17.872px;color:#111;-webkit-text-stroke:0.55px #111;transform:scaleX(0.9844);transform-origin:0 0;">C14</div>
<div class="t" style="left:1617.70px;top:968.82px;font-size:16px;line-height:17.872px;color:#111;-webkit-text-stroke:0.55px #111;transform:scaleX(0.9844);transform-origin:0 0;">C15</div>
<div class="t" style="left:1699.80px;top:968.82px;font-size:16px;line-height:17.872px;color:#111;-webkit-text-stroke:0.55px #111;transform:scaleX(0.9844);transform-origin:0 0;">C16</div>
<div class="t" style="left:1781.90px;top:968.82px;font-size:16px;line-height:17.872px;color:#111;-webkit-text-stroke:0.55px #111;transform:scaleX(0.9844);transform-origin:0 0;">C17</div>
<div class="t" style="left:1864.00px;top:968.82px;font-size:16px;line-height:17.872px;color:#111;-webkit-text-stroke:0.55px #111;transform:scaleX(0.9844);transform-origin:0 0;">C18</div>
<div class="t" style="left:1946.10px;top:968.82px;font-size:16px;line-height:17.872px;color:#111;-webkit-text-stroke:0.55px #111;transform:scaleX(0.9844);transform-origin:0 0;">C19</div>
<div class="t" style="left:2028.20px;top:968.82px;font-size:16px;line-height:17.872px;color:#111;-webkit-text-stroke:0.55px #111;transform:scaleX(0.9844);transform-origin:0 0;">C20</div>
<div class="t" style="left:2110.25px;top:968.82px;font-size:16px;line-height:17.872px;color:#111;-webkit-text-stroke:0.55px #111;transform:scaleX(0.9844);transform-origin:0 0;">C21</div>
<svg style="position:absolute;left:297px;top:970px" width="11" height="13"><path d="M3.2 0 L7.8 0 L7.8 6 L10.5 6 L5.5 12 L0.5 6 L3.2 6 Z" fill="#3a3a3a"/></svg>
<svg style="position:absolute;left:409px;top:977px" width="11" height="11"><rect x="0" y="0" width="10.5" height="10.5" fill="#5fa97c"/><path d="M2 5.5 L4.3 7.8 L8.8 2.8" stroke="#fff" stroke-width="1.4" fill="none"/></svg>
<div class="t" style="left:349.25px;top:995.82px;font-size:16px;line-height:17.872px;color:#111;-webkit-text-stroke:0.55px #111;transform:scaleX(1.0033);transform-origin:0 0;">Salary</div>
<div class="t" style="left:427.55px;top:995.82px;font-size:16px;line-height:17.872px;color:#111;-webkit-text-stroke:0.55px #111;transform:scaleX(1.0307);transform-origin:0 0;">Experience</div>
<div class="t" style="left:521.50px;top:995.82px;font-size:16px;line-height:17.872px;color:#111;-webkit-text-stroke:0.55px #111;transform:scaleX(1.0929);transform-origin:0 0;">MBA Dummy Varible</div>
<div class="t" style="left:297.55px;top:1025.32px;font-size:16px;line-height:17.872px;color:#111;-webkit-text-stroke:0.6px #111;">1</div>
<div class="t" style="left:329.38px;top:1023.82px;font-size:16px;line-height:17.872px;color:#111;-webkit-text-stroke:0.15px #111;transform:scaleX(0.9781);transform-origin:0 0;">$130,468.00</div>
<div class="t" style="left:479.64px;top:1023.82px;font-size:16px;line-height:17.872px;color:#111;-webkit-text-stroke:0.15px #111;transform:scaleX(0.9781);transform-origin:0 0;">10.0</div>
<div class="t" style="left:673.00px;top:1023.82px;font-size:16px;line-height:17.872px;color:#111;-webkit-text-stroke:0.15px #111;transform:scaleX(0.9781);transform-origin:0 0;">0</div>
<div class="t" style="left:297.55px;top:1053.52px;font-size:16px;line-height:17.872px;color:#111;-webkit-text-stroke:0.6px #111;">2</div>
<div class="t" style="left:338.08px;top:1052.02px;font-size:16px;line-height:17.872px;color:#111;-webkit-text-stroke:0.15px #111;transform:scaleX(0.9781);transform-origin:0 0;">$62,250.00</div>
<div class="t" style="left:488.35px;top:1052.02px;font-size:16px;line-height:17.872px;color:#111;-webkit-text-stroke:0.15px #111;transform:scaleX(0.9781);transform-origin:0 0;">1.0</div>
<div class="t" style="left:673.00px;top:1052.02px;font-size:16px;line-height:17.872px;color:#111;-webkit-text-stroke:0.15px #111;transform:scaleX(0.9781);transform-origin:0 0;">1</div>
<div class="t" style="left:297.55px;top:1081.72px;font-size:16px;line-height:17.872px;color:#111;-webkit-text-stroke:0.6px #111;">3</div>
<div class="t" style="left:338.08px;top:1080.22px;font-size:16px;line-height:17.872px;color:#111;-webkit-text-stroke:0.15px #111;transform:scaleX(0.9781);transform-origin:0 0;">$50,000.00</div>
<div class="t" style="left:488.35px;top:1080.22px;font-size:16px;line-height:17.872px;color:#111;-webkit-text-stroke:0.15px #111;transform:scaleX(0.9781);transform-origin:0 0;">2.3</div>
<div class="t" style="left:673.00px;top:1080.22px;font-size:16px;line-height:17.872px;color:#111;-webkit-text-stroke:0.15px #111;transform:scaleX(0.9781);transform-origin:0 0;">0</div>
<div class="t" style="left:297.55px;top:1109.92px;font-size:16px;line-height:17.872px;color:#111;-webkit-text-stroke:0.6px #111;">4</div>
<div class="t" style="left:329.38px;top:1108.42px;font-size:16px;line-height:17.872px;color:#111;-webkit-text-stroke:0.15px #111;transform:scaleX(0.9781);transform-origin:0 0;">$140,000.00</div>
<div class="t" style="left:488.35px;top:1108.42px;font-size:16px;line-height:17.872px;color:#111;-webkit-text-stroke:0.15px #111;transform:scaleX(0.9781);transform-origin:0 0;">9.0</div>
<div class="t" style="left:673.00px;top:1108.42px;font-size:16px;line-height:17.872px;color:#111;-webkit-text-stroke:0.15px #111;transform:scaleX(0.9781);transform-origin:0 0;">1</div>
<div class="t" style="left:297.55px;top:1138.12px;font-size:16px;line-height:17.872px;color:#111;-webkit-text-stroke:0.6px #111;">5</div>
<div class="t" style="left:330.54px;top:1136.62px;font-size:16px;line-height:17.872px;color:#111;-webkit-text-stroke:0.15px #111;transform:scaleX(0.9781);transform-origin:0 0;">$110,000.00</div>
<div class="t" style="left:488.35px;top:1136.62px;font-size:16px;line-height:17.872px;color:#111;-webkit-text-stroke:0.15px #111;transform:scaleX(0.9781);transform-origin:0 0;">8.0</div>
<div class="t" style="left:673.00px;top:1136.62px;font-size:16px;line-height:17.872px;color:#111;-webkit-text-stroke:0.15px #111;transform:scaleX(0.9781);transform-origin:0 0;">0</div>
<div class="t" style="left:297.55px;top:1166.32px;font-size:16px;line-height:17.872px;color:#111;-webkit-text-stroke:0.6px #111;">6</div>
<div class="t" style="left:338.08px;top:1164.82px;font-size:16px;line-height:17.872px;color:#111;-webkit-text-stroke:0.15px #111;transform:scaleX(0.9781);transform-origin:0 0;">$80,050.00</div>
<div class="t" style="left:488.35px;top:1164.82px;font-size:16px;line-height:17.872px;color:#111;-webkit-text-stroke:0.15px #111;transform:scaleX(0.9781);transform-origin:0 0;">2.8</div>
<div class="t" style="left:673.00px;top:1164.82px;font-size:16px;line-height:17.872px;color:#111;-webkit-text-stroke:0.15px #111;transform:scaleX(0.9781);transform-origin:0 0;">1</div>
<div class="t" style="left:297.55px;top:1194.52px;font-size:16px;line-height:17.872px;color:#111;-webkit-text-stroke:0.6px #111;">7</div>
<div class="t" style="left:338.08px;top:1193.02px;font-size:16px;line-height:17.872px;color:#111;-webkit-text-stroke:0.15px #111;transform:scaleX(0.9781);transform-origin:0 0;">$95,772.00</div>
<div class="t" style="left:488.35px;top:1193.02px;font-size:16px;line-height:17.872px;color:#111;-webkit-text-stroke:0.15px #111;transform:scaleX(0.9781);transform-origin:0 0;">7.0</div>
<div class="t" style="left:673.00px;top:1193.02px;font-size:16px;line-height:17.872px;color:#111;-webkit-text-stroke:0.15px #111;transform:scaleX(0.9781);transform-origin:0 0;">0</div>
<div class="t" style="left:297.55px;top:1222.72px;font-size:16px;line-height:17.872px;color:#111;-webkit-text-stroke:0.6px #111;">8</div>
<div class="t" style="left:330.54px;top:1221.22px;font-size:16px;line-height:17.872px;color:#111;-webkit-text-stroke:0.15px #111;transform:scaleX(0.9781);transform-origin:0 0;">$110,000.00</div>
<div class="t" style="left:488.35px;top:1221.22px;font-size:16px;line-height:17.872px;color:#111;-webkit-text-stroke:0.15px #111;transform:scaleX(0.9781);transform-origin:0 0;">6.0</div>
<div class="t" style="left:673.00px;top:1221.22px;font-size:16px;line-height:17.872px;color:#111;-webkit-text-stroke:0.15px #111;transform:scaleX(0.9781);transform-origin:0 0;">1</div>
<div style="left:923px;top:319px;width:849px;height:495px;background:#fff;border:1px solid #a9a9a9;box-sizing:border-box;"></div>
<div style="left:924px;top:358px;width:847px;height:455px;background:#f0f0f0;"></div>
<div class="t" style="left:934.40px;top:329.82px;font-size:16px;line-height:17.872px;color:#9a9a9a;transform:scaleX(0.9238);transform-origin:0 0;">Predict</div>
<svg style="position:absolute;left:1744px;top:330px" width="15" height="15"><path d="M1 1 L13.5 13.5 M13.5 1 L1 13.5" stroke="#777" stroke-width="1.3" fill="none"/></svg>
<div style="left:932px;top:366px;width:169px;height:331px;background:#fff;box-sizing:border-box;border:1px solid #707070;box-shadow:inset 1px 1px 0 #a0a0a0, inset 2px 2px 0 #707070, inset -1px -1px 0 #fff, inset -2px -2px 0 #e8e8e8, -1px -1px 0 #fff;"></div>
<div class="t" style="left:1117.20px;top:370.63px;font-size:14px;line-height:15.638px;color:#111;-webkit-text-stroke:0.15px #111;transform:scaleX(0.9533);transform-origin:0 0;"><u>R</u>esponse:</div>
<div style="left:1201px;top:365.5px;width:252px;height:25.5px;background:#fff;box-sizing:border-box;border-top:2px solid #707070;border-left:2px solid #707070;border-bottom:1px solid #e3e3e3;border-right:1px solid #e3e3e3;box-shadow:1px 1px 0 #fff;"></div>
<div class="t" style="left:1205.60px;top:372.63px;font-size:14px;line-height:15.638px;color:#111;-webkit-text-stroke:0.15px #111;transform:scaleX(1.0332);transform-origin:0 0;">Salary</div>
<div style="left:1430px;top:367.5px;width:22px;height:22.5px;background:#f0f0f0;box-sizing:border-box;border-top:1px solid #fff;border-left:1px solid #e8e8e8;border-bottom:2px solid #707070;border-right:2px solid #707070;box-shadow:inset 1px 0 0 #fff;"></div>
<svg style="position:absolute;left:1436px;top:377.0px" width="10" height="6"><path d="M0 0 L9 0 L4.5 5 Z" fill="#111"/></svg>
<div style="left:1116px;top:412px;width:337px;height:25px;background:#fff;box-sizing:border-box;border-top:2px solid #707070;border-left:2px solid #707070;border-bottom:1px solid #e3e3e3;border-right:1px solid #e3e3e3;box-shadow:1px 1px 0 #fff;"></div>
<div class="t" style="left:1120.60px;top:418.63px;font-size:14px;line-height:15.638px;color:#111;-webkit-text-stroke:0.15px #111;transform:scaleX(0.9752);transform-origin:0 0;">Enter individual values</div>
<div style="left:1430px;top:414px;width:22px;height:22px;background:#f0f0f0;box-sizing:border-box;border-top:1px solid #fff;border-left:1px solid #e8e8e8;border-bottom:2px solid #707070;border-right:2px solid #707070;box-shadow:inset 1px 0 0 #fff;"></div>
<svg style="position:absolute;left:1436px;top:423.5px" width="10" height="6"><path d="M0 0 L9 0 L4.5 5 Z" fill="#111"/></svg>
<div style="left:1350px;top:450px;width:39px;height:31px;background:#f0f0f0;box-sizing:border-box;border-top:1px solid #fff;border-left:1px solid #fff;border-bottom:2px solid #0c0c0c;border-right:2px solid #0c0c0c;"></div>
<svg style="position:absolute;left:1359px;top:456px" width="20" height="18"><path d="M2.5 2 L16.5 15.5 M16 2 L3 15.5" stroke="#7a1010" stroke-width="2.4" fill="none"/><path d="M2 15.5 L5 13" stroke="#7a1010" stroke-width="3"/></svg>
<div style="left:1116px;top:488px;width:273px;height:182px;background:#fff;box-sizing:border-box;border:2px solid #707070;"></div>
<div style="left:1118px;top:490px;width:245px;height:22px;background:#f0f0f0;"></div>
<div style="left:1363px;top:490px;width:24px;height:178px;background:#f0f0f0;"></div>
<div style="left:1118px;top:511px;width:245px;height:2px;background:#c8c8c8;"></div>
<div style="left:1118px;top:542px;width:245px;height:2px;background:#c8c8c8;"></div>
<div style="left:1118px;top:573px;width:245px;height:2px;background:#c8c8c8;"></div>
<div style="left:1118px;top:604px;width:245px;height:2px;background:#c8c8c8;"></div>
<div style="left:1118px;top:635px;width:245px;height:2px;background:#c8c8c8;"></div>
<div style="left:1118px;top:666px;width:245px;height:2px;background:#c8c8c8;"></div>
<div style="left:1239px;top:491px;width:2px;height:177px;background:#c8c8c8;"></div>
<div style="left:1361px;top:491px;width:2px;height:177px;background:#c8c8c8;"></div>
<div class="t" style="left:1139.50px;top:492.82px;font-size:16px;line-height:17.872px;color:#111;font-weight:bold;transform:scaleX(0.9253);transform-origin:0 0;">Experience</div>
<div style="left:1243px;top:491px;width:119px;height:20px;overflow:hidden;"><div class="t" style="position:absolute;left:2px;top:1.82px;font-size:16px;line-height:17.872px;font-weight:bold;color:#111;transform:scaleX(0.9372);transform-origin:0 0">&#39;MBA Dummy Varible</div></div>
<div class="t" style="left:1119.80px;top:519.63px;font-size:14px;line-height:15.638px;color:#111;-webkit-text-stroke:0.15px #111;transform:scaleX(0.9634);transform-origin:0 0;">3</div>
<div class="t" style="left:1244.00px;top:519.63px;font-size:14px;line-height:15.638px;color:#111;-webkit-text-stroke:0.15px #111;transform:scaleX(0.9377);transform-origin:0 0;">10039</div>
<svg style="position:absolute;left:1370px;top:497px" width="13" height="9"><path d="M1.5 7 L6.5 2 L11.5 7" stroke="#444" stroke-width="1.6" fill="none"/></svg>
<div style="left:1366.5px;top:512px;width:19px;height:22px;background:#c8c8c8;"></div>
<svg style="position:absolute;left:1370px;top:653px" width="13" height="9"><path d="M1.5 2 L6.5 7 L11.5 2" stroke="#444" stroke-width="1.6" fill="none"/></svg>
<div style="left:966px;top:713px;width:100px;height:30px;background:#f0f0f0;box-sizing:border-box;border-top:1px solid #fff;border-left:1px solid #fff;border-bottom:2px solid #0c0c0c;border-right:2px solid #0c0c0c;"></div>
<div class="t" style="left:997.00px;top:720.63px;font-size:14px;line-height:15.638px;color:#9a9a9a;-webkit-text-stroke:0.15px #9a9a9a;transform:scaleX(0.9509);transform-origin:0 0;">Select</div>
<div style="left:1257px;top:712px;width:100px;height:31px;background:#f0f0f0;box-sizing:border-box;border-top:1px solid #fff;border-left:1px solid #fff;border-bottom:2px solid #0c0c0c;border-right:2px solid #0c0c0c;"></div>
<div class="t" style="left:1275.85px;top:720.63px;font-size:14px;line-height:15.638px;color:#111;-webkit-text-stroke:0.15px #111;transform:scaleX(1.0231);transform-origin:0 0;">Optio<u>n</u>s...</div>
<div style="left:1372px;top:712px;width:101px;height:31px;background:#f0f0f0;box-sizing:border-box;border-top:1px solid #fff;border-left:1px solid #fff;border-bottom:2px solid #0c0c0c;border-right:2px solid #0c0c0c;"></div>
<div class="t" style="left:1393.87px;top:720.63px;font-size:14px;line-height:15.638px;color:#111;-webkit-text-stroke:0.15px #111;transform:scaleX(0.9643);transform-origin:0 0;">Re<u>s</u>ults...</div>
<div style="left:1488px;top:712px;width:100px;height:31px;background:#f0f0f0;box-sizing:border-box;border-top:1px solid #fff;border-left:1px solid #fff;border-bottom:2px solid #0c0c0c;border-right:2px solid #0c0c0c;"></div>
<div class="t" style="left:1506.15px;top:720.63px;font-size:14px;line-height:15.638px;color:#111;-webkit-text-stroke:0.15px #111;transform:scaleX(1.0330);transform-origin:0 0;"><u>S</u>torage...</div>
<div style="left:1603px;top:712px;width:101px;height:31px;background:#f0f0f0;box-sizing:border-box;border-top:1px solid #fff;border-left:1px solid #fff;border-bottom:2px solid #0c0c0c;border-right:2px solid #0c0c0c;"></div>
<div class="t" style="left:1612.61px;top:720.63px;font-size:14px;line-height:15.638px;color:#111;-webkit-text-stroke:0.15px #111;transform:scaleX(0.9643);transform-origin:0 0;"><u>V</u>iew Model...</div>
<div style="left:931.5px;top:774px;width:100px;height:30px;background:#f0f0f0;box-sizing:border-box;border-top:1px solid #fff;border-left:1px solid #fff;border-bottom:2px solid #0c0c0c;border-right:2px solid #0c0c0c;"></div>
<div class="t" style="left:967.75px;top:781.63px;font-size:14px;line-height:15.638px;color:#111;-webkit-text-stroke:0.15px #111;transform:scaleX(0.9204);transform-origin:0 0;">Help</div>
<div style="left:1488px;top:774px;width:100px;height:30px;background:#f0f0f0;box-sizing:border-box;border-top:1px solid #fff;border-left:1px solid #fff;border-bottom:2px solid #0c0c0c;border-right:2px solid #0c0c0c;"></div>
<div class="t" style="left:1528.45px;top:781.63px;font-size:14px;line-height:15.638px;color:#111;-webkit-text-stroke:0.15px #111;transform:scaleX(0.8948);transform-origin:0 0;"><u>O</u>K</div>
<div style="left:1603px;top:774px;width:101px;height:30px;background:#f0f0f0;box-sizing:border-box;border-top:1px solid #fff;border-left:1px solid #fff;border-bottom:2px solid #0c0c0c;border-right:2px solid #0c0c0c;"></div>
<div class="t" style="left:1631.99px;top:781.63px;font-size:14px;line-height:15.638px;color:#111;-webkit-text-stroke:0.15px #111;transform:scaleX(0.9643);transform-origin:0 0;">Cancel</div>
<div style="left:1421px;top:450px;width:420px;height:189px;background:#fff;border:1px solid #a9a9a9;box-sizing:border-box;"></div>
<div style="left:1422px;top:490px;width:418px;height:148px;background:#f0f0f0;"></div>
<div class="t" style="left:1432.50px;top:461.82px;font-size:16px;line-height:17.872px;color:#111;-webkit-text-stroke:0.1px #111;transform:scaleX(0.9506);transform-origin:0 0;">Predict: Options</div>
<svg style="position:absolute;left:1813px;top:462px" width="15" height="15"><path d="M1 1 L13.5 13.5 M13.5 1 L1 13.5" stroke="#111" stroke-width="1.3" fill="none"/></svg>
<div class="t" style="left:1430.30px;top:503.63px;font-size:14px;line-height:15.638px;color:#111;-webkit-text-stroke:0.15px #111;transform:scaleX(0.9786);transform-origin:0 0;"><u>C</u>onfidence level:</div>
<div style="left:1545px;top:498px;width:138px;height:25px;background:#fff;box-sizing:border-box;border-top:2px solid #707070;border-left:2px solid #707070;border-bottom:1px solid #e3e3e3;border-right:1px solid #e3e3e3;box-shadow:1px 1px 0 #fff;"></div>
<div style="left:1552px;top:502px;width:16.5px;height:16px;background:#3078d6;"></div>
<div class="t" style="left:1553.00px;top:503.63px;font-size:14px;line-height:15.638px;color:#fff;-webkit-text-stroke:0.15px #fff;transform:scaleX(0.9634);transform-origin:0 0;">95</div>
<div class="t" style="left:1430.50px;top:541.63px;font-size:14px;line-height:15.638px;color:#111;-webkit-text-stroke:0.15px #111;transform:scaleX(1.0210);transform-origin:0 0;">Type of i<u>n</u>terval:</div>
<div style="left:1545px;top:537px;width:139px;height:25px;background:#fff;box-sizing:border-box;border-top:2px solid #707070;border-left:2px solid #707070;border-bottom:1px solid #e3e3e3;border-right:1px solid #e3e3e3;box-shadow:1px 1px 0 #fff;"></div>
<div class="t" style="left:1549.50px;top:542.63px;font-size:14px;line-height:15.638px;color:#111;-webkit-text-stroke:0.15px #111;transform:scaleX(0.9717);transform-origin:0 0;">Two-sided</div>
<div style="left:1662px;top:539px;width:21px;height:22px;background:#f0f0f0;box-sizing:border-box;border-top:1px solid #fff;border-left:1px solid #e8e8e8;border-bottom:2px solid #707070;border-right:2px solid #707070;"></div>
<svg style="position:absolute;left:1667.5px;top:547px" width="10" height="6"><path d="M0 0 L9 0 L4.5 5 Z" fill="#111"/></svg>
<div style="left:1429px;top:598px;width:100px;height:30px;background:#f0f0f0;box-sizing:border-box;border-top:1px solid #fff;border-left:1px solid #fff;border-bottom:2px solid #0c0c0c;border-right:2px solid #0c0c0c;"></div>
<div class="t" style="left:1465.25px;top:606.63px;font-size:14px;line-height:15.638px;color:#111;-webkit-text-stroke:0.15px #111;transform:scaleX(0.9204);transform-origin:0 0;">Help</div>
<div style="left:1614px;top:598px;width:100px;height:30px;background:#f0f0f0;box-sizing:border-box;border-top:1px solid #fff;border-left:1px solid #fff;border-bottom:2px solid #0c0c0c;border-right:2px solid #0c0c0c;"></div>
<div class="t" style="left:1654.45px;top:606.63px;font-size:14px;line-height:15.638px;color:#111;-webkit-text-stroke:0.15px #111;transform:scaleX(0.8948);transform-origin:0 0;"><u>O</u>K</div>
<div style="left:1729.5px;top:598px;width:100px;height:30px;background:#f0f0f0;box-sizing:border-box;border-top:1px solid #fff;border-left:1px solid #fff;border-bottom:2px solid #0c0c0c;border-right:2px solid #0c0c0c;"></div>
<div class="t" style="left:1757.99px;top:606.63px;font-size:14px;line-height:15.638px;color:#111;-webkit-text-stroke:0.15px #111;transform:scaleX(0.9643);transform-origin:0 0;">Cancel</div>
</body></html>
